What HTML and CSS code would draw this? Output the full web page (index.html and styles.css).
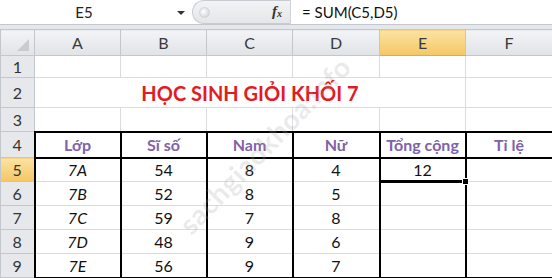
FILE: index.html
```html
<!DOCTYPE html>
<html>
<head>
<meta charset="utf-8">
<link rel="stylesheet" href="styles.css">
</head>
<body>
<div class="fbar">
  <div class="namebox">E5</div>
  <div class="nb-arrow"><svg width="10" height="6" viewBox="0 0 10 6"><path d="M1 1 L9 1 L5 5 Z" fill="#333"/></svg></div>
  <div class="pill"><span class="grip"></span><span class="fx">f<sub>x</sub></span></div>
  <div class="formula">= SUM(C5,D5)</div>
</div>
<div class="band"></div>
<table class="sheet">
  <colgroup>
    <col class="c-rh"><col class="c-a"><col class="c-b"><col class="c-c"><col class="c-d"><col class="c-e"><col class="c-f">
  </colgroup>
  <tr class="r-head">
    <th class="corner"><span class="tri"></span></th>
    <th class="ch">A</th><th class="ch">B</th><th class="ch">C</th><th class="ch">D</th><th class="ch sel">E</th><th class="ch">F</th>
  </tr>
  <tr class="r1"><th class="rh">1</th><td></td><td></td><td></td><td></td><td></td><td></td></tr>
  <tr class="r2"><th class="rh">2</th><td colspan="5" class="title">HỌC SINH GIỎI KHỐI 7</td><td></td></tr>
  <tr class="r3"><th class="rh">3</th><td></td><td></td><td></td><td></td><td></td><td></td></tr>
  <tr class="r4"><th class="rh">4</th><td class="hd">Lớp</td><td class="hd">Sĩ số</td><td class="hd">Nam</td><td class="hd">Nữ</td><td class="hd">Tổng cộng</td><td class="hd">Tỉ lệ</td></tr>
  <tr class="rd"><th class="rh sel">5</th><td class="cls">7A</td><td>54</td><td>8</td><td>4</td><td class="active">12</td><td></td></tr>
  <tr class="rd"><th class="rh">6</th><td class="cls">7B</td><td>52</td><td>8</td><td>5</td><td></td><td></td></tr>
  <tr class="rd"><th class="rh">7</th><td class="cls">7C</td><td>59</td><td>7</td><td>8</td><td></td><td></td></tr>
  <tr class="rd"><th class="rh">8</th><td class="cls">7D</td><td>48</td><td>9</td><td>6</td><td></td><td></td></tr>
  <tr class="rd last"><th class="rh">9</th><td class="cls">7E</td><td>56</td><td>9</td><td>7</td><td></td><td></td></tr>
</table>
<div class="handle"></div>
<div class="watermark">sachgiaokhoa.info</div>
</body>
</html>
```
FILE: styles.css
```css
html, body {
  margin: 0;
  padding: 0;
}
body {
  width: 552px;
  height: 278px;
  overflow: hidden;
  position: relative;
  background: #fff;
  font-family: Lato, "Open Sans", sans-serif;
  color: #111;
}
.fbar {
  display: flex;
  align-items: center;
  height: 24px;
  border-bottom: 1px solid #c4c7cc;
  background: #fff;
}
.namebox {
  width: 168px;
  text-align: center;
  font-size: 15px;
  color: #222;
}
.nb-arrow {
  width: 10px;
  margin-left: 8px;
  display: flex;
  align-items: center;
  padding-top: 2px;
}
.pill {
  margin-left: 6px;
  width: 99px;
  height: 24px;
  box-sizing: border-box;
  border: 1px solid #c8cbd0;
  border-right: 1px solid #cfd2d6;
  border-radius: 12px 0 0 12px;
  background: linear-gradient(#f2f3f5, #e4e6e9);
  display: flex;
  align-items: center;
  position: relative;
}
.grip {
  position: absolute;
  left: 6px;
  top: 6px;
  width: 9px;
  height: 9px;
  border-radius: 50%;
  background: radial-gradient(circle at 40% 40%, #ffffff, #c8cbd0);
  border: 1px solid #d2d4d8;
}
.fx {
  position: absolute;
  left: 79px;
  top: 2px;
  font-family: "Liberation Serif", serif;
  font-style: italic;
  font-weight: bold;
  font-size: 15px;
  color: #333;
}
.fx sub {
  font-size: 10px;
  vertical-align: -1px;
}
.formula {
  margin-left: 11px;
  font-size: 15px;
  color: #111;
}
.band {
  height: 4px;
  background: #e4e7eb;
}
.sheet {
  border-collapse: collapse;
  table-layout: fixed;
  width: 552px;
}
.c-rh { width: 34px; }
.c-a { width: 86px; }
.c-b { width: 86px; }
.c-c { width: 86px; }
.c-d { width: 87px; }
.c-e { width: 86px; }
.c-f { width: 87px; }
th, td {
  padding: 0;
  overflow: hidden;
  white-space: nowrap;
}
td {
  border: 1px solid #dadcdf;
  text-align: center;
  font-size: 16px;
}
.r-head { height: 26px; }
.r1 { height: 22px; }
.r2 { height: 30px; }
.r3 { height: 24px; }
.r4 { height: 26px; }
.rd { height: 24px; }
.ch {
  background: linear-gradient(#f3f4f6, #e0e3e7);
  border: 1px solid #c3c7cc;
  font-weight: normal;
  font-size: 16px;
  color: #3a3a3a;
}
.ch.sel {
  background: linear-gradient(#fbe3a2, #f4c764);
  border-bottom: 1px solid #e3ad3b;
}
.corner {
  background: linear-gradient(#f3f4f6, #e0e3e7);
  border: 1px solid #c3c7cc;
  position: relative;
}
.tri {
  position: absolute;
  right: 5px;
  bottom: 4px;
  width: 0;
  height: 0;
  border-left: 12px solid transparent;
  border-bottom: 12px solid #c9cbce;
}
.rh {
  background: #e6e8eb;
  border: 1px solid #c3c7cc;
  font-weight: normal;
  font-size: 16px;
  color: #333;
}
.rh.sel {
  background: linear-gradient(#fbe3a2, #f4c764);
  border-right: 1px solid #e3ad3b;
}
.title {
  color: #e31b23;
  font-weight: bold;
  font-size: 20px;
  text-align: center;
}
.r4 td,
.rd td {
  border-left: 2px solid #000;
  border-right: 2px solid #000;
}
.r4 td {
  border-top: 2px solid #000;
  border-bottom: 2px solid #000;
}
.hd {
  color: #7e62ab;
  font-weight: bold;
  font-size: 16px;
}
.cls {
  font-style: italic;
}
.rd.last td {
  border-bottom: 2px solid #000;
}
td.active {
  border: 2px solid #000;
  border-bottom: 3px solid #000;
}
.handle {
  position: absolute;
  left: 462px;
  top: 178px;
  width: 5px;
  height: 5px;
  background: #000;
  border: 1px solid #fff;
}
.watermark {
  position: absolute;
  left: 148px;
  top: 128px;
  font-size: 28px;
  font-weight: bold;
  color: rgba(160, 160, 160, 0.22);
  transform: rotate(-46deg);
  transform-origin: center;
  letter-spacing: 0.5px;
  pointer-events: none;
}
```
